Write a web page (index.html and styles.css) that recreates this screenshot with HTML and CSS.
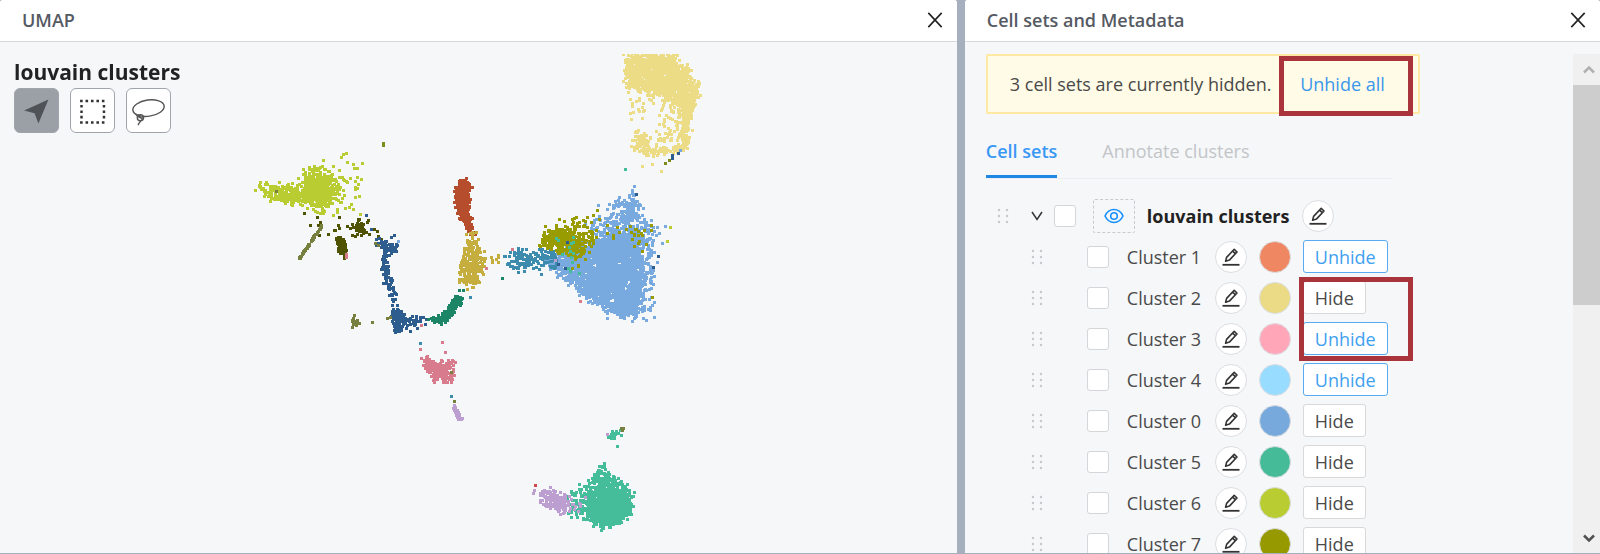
FILE: index.html
```html
<!DOCTYPE html>
<html lang="en">
<head>
    <meta charset="UTF-8">
    <meta name="viewport" content="width=device-width, initial-scale=1.0">
    <title>Data Exploration</title>
    <link rel="stylesheet" href="styles.css">
</head>
<body>
    <svg class="sprite" aria-hidden="true">
        <symbol id="close" viewBox="0 0 18 18">
            <path d="M1.500 1 16.500 17M16.500 1 1.500 17" fill="none" stroke="#222" stroke-width="1.8"/>
        </symbol>
        <symbol id="drag" viewBox="0 0 12 16">
            <g fill="#c6c8cb">
                <circle cx="2" cy="2" r="1.2"/><circle cx="10" cy="2" r="1.2"/>
                <circle cx="2" cy="8" r="1.2"/><circle cx="10" cy="8" r="1.2"/>
                <circle cx="2" cy="14" r="1.2"/><circle cx="10" cy="14" r="1.2"/>
            </g>
        </symbol>
        <symbol id="edit" viewBox="0 0 18 18">
            <path d="M3.6 13.2 4.6 9.4 12.2 1.3 15 4 7.4 12.1ZM10.6 3.1 13.3 5.7" fill="none" stroke="#333" stroke-width="1.6" stroke-linejoin="round"/>
            <path d="M.5 16.8H17.5" stroke="#333" stroke-width="1.8"/>
        </symbol>
    </svg>

    <div class="mosaic">
        <section class="panel panel-plot">
            <header class="panel-header">
                <h2>UMAP</h2>
                <button type="button" class="close" aria-label="Close UMAP"><svg><use href="#close"/></svg></button>
            </header>
            <div class="plot">
                <canvas id="umap"></canvas>
                <div class="plot-tools">
                    <h1>louvain clusters</h1>
                    <div class="tools">
                        <button type="button" class="tool active" aria-label="Pan">
                            <svg viewBox="0 0 45 45"><path d="M35 11 24.500 36 20.500 25.500 9.500 22.500Z" fill="#4f5357"/></svg>
                        </button>
                        <button type="button" class="tool" aria-label="Select rectangle">
                            <svg viewBox="0 0 45 45"><path d="M9.500 12.500H36M9.500 35H36M11 16.700V33M34.500 16.700V33" fill="none" stroke="#333" stroke-width="2.600" stroke-dasharray="2.700 3"/></svg>
                        </button>
                        <button type="button" class="tool" aria-label="Select lasso">
                            <svg viewBox="0 0 45 45"><g fill="none" stroke="#555" stroke-width="1.500">
                                <ellipse cx="22.500" cy="20" rx="16.500" ry="8.500" transform="rotate(-8 22.500 20)"/>
                                <circle cx="14" cy="30" r="3.200"/>
                                <path d="M9 26C12 30 15 31 18 30M12 27 16 32M14 33C15 35 11 35 12 38"/>
                            </g></svg>
                        </button>
                    </div>
                </div>
            </div>
        </section>

        <section class="panel panel-sets">
            <header class="panel-header">
                <h2>Cell sets and Metadata</h2>
                <button type="button" class="close" aria-label="Close Cell sets and Metadata"><svg><use href="#close"/></svg></button>
            </header>
            <div class="sets">
                <div class="sets-content">
                    <div class="alert">
                        <span>3 cell sets are currently hidden.</span>
                        <button type="button" class="link">Unhide all</button>
                        <div class="marker marker-alert"></div>
                    </div>
                    <nav class="tabs">
                        <a href="#sets" class="tab active">Cell sets</a>
                        <a href="#annotate" class="tab">Annotate clusters</a>
                    </nav>
                    <div class="tree">
                        <div class="root">
                            <svg class="drag"><use href="#drag"/></svg>
                            <button type="button" class="toggle" aria-label="Collapse">
                                <svg viewBox="0 0 12 10"><path d="M1 1 6 8.500 11 1" fill="none" stroke="#333" stroke-width="1.500"/></svg>
                            </button>
                            <input type="checkbox" id="louvain">
                            <button type="button" class="eye" aria-label="Show louvain clusters">
                                <svg viewBox="0 0 20 16"><g fill="none" stroke="#1890ff" stroke-width="1.600">
                                    <path d="M1 8C5-.6 15-.6 19 8 15 16.600 5 16.600 1 8Z"/>
                                    <circle cx="10" cy="8" r="3.300"/>
                                </g></svg>
                            </button>
                            <label for="louvain">louvain clusters</label>
                            <button type="button" class="edit" aria-label="Edit louvain clusters"><svg><use href="#edit"/></svg></button>
                        </div>
                        <ul id="clusters" class="clusters"></ul>
                        <div class="marker marker-rows"></div>
                    </div>
                </div>
                <div class="scrollbar">
                    <button type="button" aria-label="Scroll up"><svg viewBox="0 0 12 10"><path d="M1 7.500 6 2.500 11 7.500" fill="none" stroke="#b0b0b0" stroke-width="2.500"/></svg></button>
                    <div class="thumb"></div>
                    <button type="button" class="down" aria-label="Scroll down"><svg viewBox="0 0 12 10"><path d="M1 2.500 6 7.500 11 2.500" fill="none" stroke="#505050" stroke-width="2.500"/></svg></button>
                </div>
            </div>
        </section>
    </div>

    <script src="script.js"></script>
</body>
</html>
```

FILE: styles.css
```css
* {
    box-sizing: border-box;
}

body {
    margin: 0;
    font-family: 'Open Sans', 'Noto Sans', sans-serif;
    font-size: 18px;
    line-height: 24px;
    color: #4a4a4a;
    background-color: #a5afbd;
}

button {
    font: inherit;
    color: inherit;
    padding: 0;
    border: none;
    background: none;
    cursor: pointer;
}

svg {
    display: block;
}

.sprite {
    display: none;
}

.mosaic {
    display: flex;
    gap: 8px;
    height: 100vh;
    padding-bottom: 1px;
    overflow: hidden;
}

.panel {
    display: flex;
    flex-direction: column;
    min-width: 0;
    flex: 399 1 0;
    background-color: #f5f7f9;
    border-radius: 3px 3px 0 0;
    overflow: hidden;
}

.panel-plot {
    flex-grow: 601;
}

.panel-header {
    display: flex;
    align-items: center;
    justify-content: space-between;
    flex: none;
    height: 42px;
    padding: 0 14px 2px 22px;
    background-color: #fff;
    border-bottom: 1px solid #d6d8db;
}

.panel-header h2 {
    margin: 0;
    font-size: 18px;
    font-weight: 600;
    color: #555a63;
}

.close svg {
    width: 16px;
    height: 18px;
}

/* Plot */

.plot {
    display: grid;
    flex: 1;
    min-height: 0;
    padding-top: 12px;
}

.plot > * {
    grid-area: 1 / 1;
}

#umap {
    width: 100%;
    height: 100%;
    min-height: 0;
}

.plot-tools {
    justify-self: start;
    padding: 6px 14px;
}

.plot-tools h1 {
    margin: 0 0 4px;
    font-size: 21px;
    font-weight: 700;
    line-height: 24px;
    color: #222;
}

.tools {
    display: flex;
    gap: 11px;
}

.tool {
    width: 45px;
    height: 45px;
    border: 1px solid #a0a4ab;
    border-radius: 6px;
    background-color: #fff;
}

.tool.active {
    background-color: #9ba0a7;
}

/* Cell sets */

.sets {
    display: flex;
    flex: 1;
    min-height: 0;
    padding: 12px 0 0 21px;
}

.sets-content {
    flex: 1;
    min-width: 0;
    overflow: hidden;
}

.alert {
    position: relative;
    display: flex;
    align-items: center;
    width: 434px;
    height: 60px;
    padding-left: 22px;
    background-color: #fffbe6;
    border: 2px solid #ffe9a3;
    border-radius: 2px;
}

.link {
    margin-left: auto;
    padding-right: 33px;
    color: #3a97ec;
}

.marker {
    position: absolute;
    border: 5px solid #aa343b;
    pointer-events: none;
}

.marker-alert {
    top: 0;
    right: 5px;
    width: 134px;
    height: 60px;
}

.marker-rows {
    top: 82px;
    left: 313px;
    width: 114px;
    height: 84px;
}

.tabs {
    display: flex;
    gap: 45px;
    width: 406px;
    margin-top: 25px;
    border-bottom: 1px solid #eceef1;
}

.tab {
    padding-bottom: 12px;
    color: #c3c5c8;
    text-decoration: none;
}

.tab.active {
    font-weight: 600;
    color: #3a98f5;
    border-bottom: 3px solid #1e88e5;
}

.tree {
    position: relative;
    margin-top: 16px;
}

.root,
.clusters li {
    display: flex;
    align-items: center;
    height: 41px;
}

.root {
    padding-left: 11px;
}

.clusters {
    margin: 0;
    padding: 0;
    list-style: none;
}

.clusters li {
    padding-left: 45px;
}

.drag {
    width: 12px;
    height: 16px;
}

input[type="checkbox"] {
    appearance: none;
    width: 22px;
    height: 22px;
    margin: 0 0 0 44px;
    background-color: #fff;
    border: 1px solid #d4d6d9;
    border-radius: 3px;
}

.toggle {
    margin-left: 22px;
}

.toggle svg {
    width: 12px;
    height: 10px;
}

.root input[type="checkbox"] {
    margin-left: 11px;
}

.eye {
    display: grid;
    place-items: center;
    width: 42px;
    height: 34px;
    margin-left: 17px;
    border: 1px dashed #c8cacd;
    border-radius: 2px;
}

.eye svg {
    width: 20px;
    height: 16px;
}

.root label {
    width: 143px;
    margin-left: 12px;
    font-weight: 700;
    color: #222;
    white-space: nowrap;
}

.clusters label {
    width: 76px;
    margin-left: 18px;
    white-space: nowrap;
}

.edit,
.color {
    flex: none;
    width: 32px;
    height: 32px;
    margin-left: 12px;
    border: 1px solid #dcdee1;
    border-radius: 50%;
}

.edit {
    display: grid;
    place-items: center;
    background-color: #fff;
}

.edit svg {
    width: 18px;
    height: 18px;
}

.visibility {
    height: 33px;
    margin-left: 12px;
    padding: 0 11px;
    background-color: #fff;
    border: 1px solid #d9d9d9;
    border-radius: 3px;
}

.visibility.hidden {
    color: #409ff0;
    border-color: #58abf2;
}

.scrollbar {
    display: flex;
    flex-direction: column;
    width: 27px;
    background-color: #f0f0f0;
}

.scrollbar button {
    display: grid;
    place-items: center;
    height: 31px;
    padding-left: 4px;
}

.scrollbar svg {
    width: 12px;
    height: 10px;
}

.scrollbar .down {
    margin-top: auto;
}

.thumb {
    flex: 0 0 44%;
    background-color: #cdcdcd;
}
```

FILE: script.js
```js
const clusters = [
    { name: 'Cluster 1', color: '#ef8763', hidden: true },
    { name: 'Cluster 2', color: '#ebdb86', hidden: false },
    { name: 'Cluster 3', color: '#ffa6b9', hidden: true },
    { name: 'Cluster 4', color: '#98dcff', hidden: true },
    { name: 'Cluster 0', color: '#77a9dc', hidden: false },
    { name: 'Cluster 5', color: '#46bb98', hidden: false },
    { name: 'Cluster 6', color: '#b9cc32', hidden: false },
    { name: 'Cluster 7', color: '#979900', hidden: false }
];

document.getElementById('clusters').innerHTML = clusters.map((c, i) => `
    <li>
        <svg class="drag"><use href="#drag"/></svg>
        <input type="checkbox" id="cluster${i}">
        <label for="cluster${i}">${c.name}</label>
        <button type="button" class="edit" aria-label="Edit ${c.name}"><svg><use href="#edit"/></svg></button>
        <button type="button" class="color" aria-label="Color of ${c.name}" style="background-color: ${c.color}"></button>
        <button type="button" class="visibility ${c.hidden ? 'hidden' : ''}">${c.hidden ? 'Unhide' : 'Hide'}</button>
    </li>`).join('');

// Each cloud: color, number of cells, outline, spread past the outline
const clouds = [
    ['#b9cd33', 170, [[257,187],[264,184],[285,185],[300,190],[302,196],[290,202],[275,200],[262,192]], 5],
    ['#b9cd33', 340, [[303,186],[308,177],[318,173],[328,176],[331,188],[331,200],[323,205],[312,203],[304,198]], 10],
    ['#b9cd33', 110, [[290,186],[302,174],[316,164],[332,168],[344,182],[343,205],[338,214],[315,210],[292,202]], 10],
    ['#b9cd33', 40, [[318,163],[344,152],[358,165],[364,198],[364,215],[340,215]], 6],
    ['#4f5200', 26, [[298,210],[335,216],[366,218],[384,238],[345,240],[320,236]], 4],
    ['#4f5200', 80, [[336,236],[342,236],[346,256],[343,257],[338,248]], 3],
    ['#4f5200', 38, [[353,224],[361,220],[364,232],[358,232]], 6],
    ['#2d5d8f', 50, [[375,238],[384,244],[398,246],[396,248],[388,250],[380,246]], 5],
    ['#2d5d8f', 90, [[384,248],[389,248],[387,272],[393,290],[396,305],[392,298],[386,284],[382,268]], 4],
    ['#2d5d8f', 120, [[394,306],[399,309],[402,320],[401,329],[395,329],[394,320]], 5],
    ['#2d5d8f', 32, [[404,319],[425,319],[425,321],[404,324]], 5],
    ['#1b8565', 210, [[428,320],[442,317],[453,303],[459,296],[463,301],[455,306],[446,319],[430,320]], 4],
    ['#b64e2e', 330, [[463,179],[467,179],[469,190],[467,207],[473,234],[470,234],[461,216],[456,205],[457,186]], 4],
    ['#c5ae3e', 32, [[468,228],[473,236],[475,250],[469,248]], 6],
    ['#c5ae3e', 220, [[467,249],[477,249],[482,264],[479,278],[473,286],[461,286],[461,262]], 7],
    ['#c5ae3e', 10, [[480,254],[509,257],[509,259],[484,260]], 5],
    ['#78aadf', 2500, [[546,260],[560,252],[592,244],[612,236],[640,232],[642,250],[640,294],[635,316],[620,315],[604,306],[584,292],[566,276]], 8],
    ['#78aadf', 220, [[588,226],[606,210],[624,200],[636,204],[643,218],[650,232],[600,250]], 8],
    ['#78aadf', 60, [[622,202],[632,188],[636,198],[638,215],[624,222]], 6],
    ['#78aadf', 130, [[643,228],[656,228],[652,250],[650,290],[646,316],[636,320]], 8],
    ['#3d8bad', 70, [[505,254],[515,251],[528,251],[530,262],[521,270],[512,267]], 6],
    ['#3d8bad', 70, [[528,252],[552,252],[556,262],[528,266]], 9],
    ['#999c00', 300, [[540,241],[550,232],[565,230],[577,232],[584,241],[580,250],[565,250],[546,245]], 7],
    ['#999c00', 110, [[545,228],[567,222],[586,220],[600,230],[590,252],[576,270],[568,256]], 8],
    ['#45bc9a', 14, [[545,236],[575,236],[575,280],[560,255]], 6],
    ['#999c00', 26, [[590,214],[615,230],[638,224],[664,226],[650,228],[642,256],[630,235],[605,238]], 8],
    ['#eddc86', 1500, [[629,54],[672,54],[678,66],[688,71],[696,84],[695,98],[690,112],[686,120],[681,106],[668,96],[648,92],[638,87],[628,84],[625,70]], 6],
    ['#eddc86', 75, [[660,98],[690,108],[688,140],[656,146],[656,128]], 6],
    ['#eddc86', 110, [[681,108],[692,106],[686,144],[682,144]], 5],
    ['#eddc86', 85, [[638,132],[644,136],[647,149],[639,152],[636,146]], 8],
    ['#eddc86', 75, [[642,151],[670,149],[686,143],[685,147],[668,151],[650,153]], 5],
    ['#eddc86', 24, [[626,86],[640,95],[664,98],[650,124],[628,116]], 4],
    ['#d87b8d', 60, [[424,357],[430,359],[434,366],[426,369]], 4],
    ['#d87b8d', 190, [[427,368],[438,362],[451,363],[452,375],[450,384],[443,380],[433,378]], 5],
    ['#bc9ed0', 34, [[454,406],[456,408],[462,420],[460,419]], 3],
    ['#45bc9a', 1100, [[592,490],[606,484],[620,487],[629,496],[631,508],[622,518],[606,526],[596,521],[588,508]], 7],
    ['#45bc9a', 90, [[602,466],[605,466],[616,478],[628,490],[612,482],[590,484]], 5],
    ['#45bc9a', 105, [[564,496],[580,488],[592,480],[590,525],[578,520],[562,508]], 7],
    ['#bc9ed0', 150, [[540,492],[550,492],[562,496],[565,510],[556,509],[547,502]], 7],
    ['#bc9ed0', 16, [[560,494],[584,494],[584,514],[564,512]], 4],
    ['#45bc9a', 24, [[609,435],[618,431],[619,434],[610,437]], 4],
    ['#77803f', 24, [[352,320],[357,319],[357,325],[353,325]], 3]
];

// Stray cells: color, x, y
const cells = [
    ['#7d8c1a', 383, 143], ['#7d8c1a', 383, 145], ['#77803f', 354, 315], ['#77803f', 372, 322],
    ['#77803f', 387, 318], ['#77803f', 390, 317], ['#b64e2e', 472, 187], ['#77803f', 276, 191],
    ['#b9cd33', 343, 154], ['#b9cd33', 362, 163], ['#77803f', 375, 243], ['#77803f', 378, 245],
    ['#2d5d8f', 366, 215], ['#2d5d8f', 371, 229], ['#2d5d8f', 394, 235], ['#2d5d8f', 391, 237],
    ['#78aadf', 398, 241], ['#d87b8d', 346, 254], ['#d87b8d', 346, 257], ['#d87b8d', 486, 268],
    ['#1b8565', 459, 290], ['#1b8565', 463, 290], ['#3d8bad', 470, 297], ['#1b8565', 441, 324],
    ['#1b8565', 502, 278], ['#2d5d8f', 410, 331], ['#2d5d8f', 417, 328], ['#d87b8d', 421, 325],
    ['#3d8bad', 420, 343], ['#d87b8d', 420, 349], ['#d87b8d', 442, 342], ['#d87b8d', 445, 352],
    ['#3d8bad', 451, 396], ['#77803f', 454, 401], ['#77803f', 451, 372], ['#bc9ed0', 454, 405],
    ['#2d5d8f', 658, 256], ['#2d5d8f', 653, 267], ['#2d5d8f', 636, 194], ['#2d5d8f', 567, 242],
    ['#2d5d8f', 558, 264], ['#2d5d8f', 565, 268], ['#bc9ed0', 555, 260], ['#d87b8d', 580, 301],
    ['#999c00', 652, 297], ['#b9cd33', 667, 241], ['#78aadf', 662, 243], ['#78aadf', 634, 186],
    ['#78aadf', 665, 226], ['#3d8bad', 541, 274], ['#78aadf', 557, 277], ['#d87b8d', 512, 249],
    ['#b9cd33', 670, 227], ['#999c00', 651, 225], ['#999c00', 597, 210], ['#999c00', 593, 215],
    ['#2d5d8f', 672, 155], ['#2d5d8f', 672, 158], ['#2d5d8f', 678, 153], ['#78aadf', 680, 150],
    ['#7d8c1a', 669, 160], ['#7d8c1a', 665, 163], ['#eddc86', 661, 171], ['#eddc86', 652, 164],
    ['#eddc86', 642, 166], ['#45bc9a', 625, 169], ['#cf4b4b', 535, 485], ['#45bc9a', 617, 446],
    ['#bc9ed0', 534, 490], ['#bc9ed0', 533, 493], ['#45bc9a', 604, 463], ['#45bc9a', 604, 465],
    ['#bc9ed0', 607, 434], ['#77803f', 621, 428], ['#77803f', 623, 428], ['#77803f', 622, 430]
];

let seed = 7;
function random() {
    seed = (seed * 16807) % 2147483647;
    return seed / 2147483647;
}

function inside(x, y, outline) {
    let result = false;
    for (let i = 0, j = outline.length - 1; i < outline.length; j = i++) {
        const [xi, yi] = outline[i];
        const [xj, yj] = outline[j];
        if ((yi > y) !== (yj > y) && x < (xj - xi) * (y - yi) / (yj - yi) + xi) {
            result = !result;
        }
    }
    return result;
}

function drawPlot() {
    const canvas = document.getElementById('umap');
    canvas.width = canvas.clientWidth;
    canvas.height = canvas.clientHeight;
    const ctx = canvas.getContext('2d');
    ctx.translate(0, -54);

    const drawCell = (color, x, y) => {
        ctx.fillStyle = color;
        ctx.fillRect(Math.round(x) - 1, Math.round(y) - 1, 3, 3);
    };

    clouds.forEach(([color, count, outline, spread]) => {
        const xs = outline.map(p => p[0]);
        const ys = outline.map(p => p[1]);
        const left = Math.min(...xs), width = Math.max(...xs) - left;
        const top = Math.min(...ys), height = Math.max(...ys) - top;
        let drawn = 0;
        while (drawn < count) {
            const x = left + random() * width;
            const y = top + random() * height;
            if (inside(x, y, outline)) {
                // two draws per axis, so the edge thins out
                const dx = (random() + random() - 1) * spread;
                const dy = (random() + random() - 1) * spread;
                drawCell(color, x + dx, y + dy);
                drawn++;
            }
        }
    });

    // thin diagonal trail
    for (let i = 0; i < 60; i++) {
        const t = random();
        drawCell('#77803f', 299 + t * 23, 257 - t * 33 + random() * 2);
    }

    cells.forEach(([color, x, y]) => drawCell(color, x, y));
}

drawPlot();
```
